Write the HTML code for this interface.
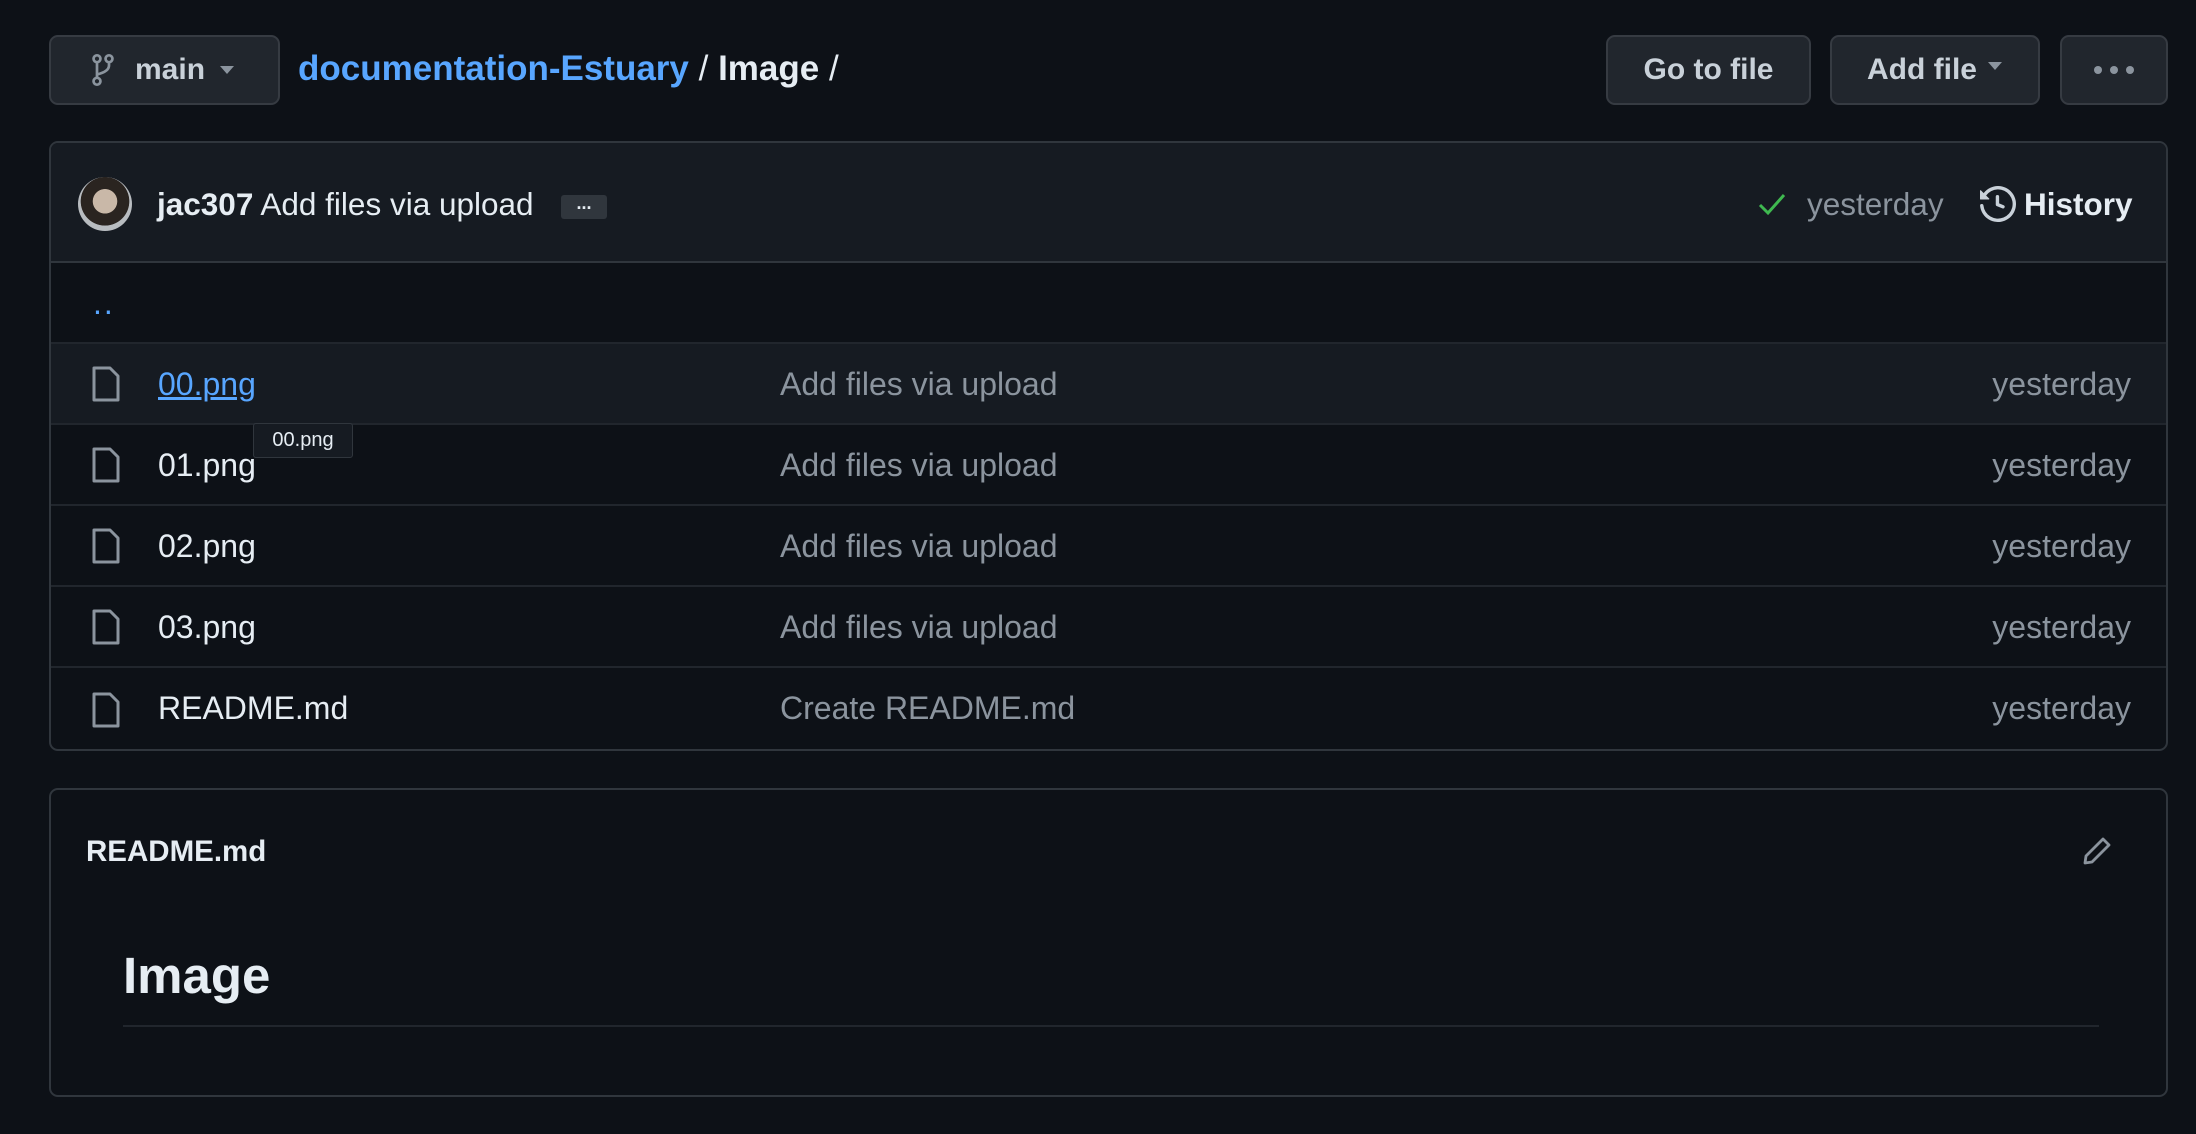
<!DOCTYPE html>
<html><head><style>
*{box-sizing:border-box;margin:0;padding:0}
body{width:2196px;height:1134px;background:#0d1117;font-family:"Liberation Sans",sans-serif;color:#e6edf3;position:relative;overflow:hidden}
.a{position:absolute}
.btn{position:absolute;top:35px;height:70px;background:#21262d;border:2px solid #363b42;border-radius:9px;font-size:30px;font-weight:bold;color:#c9d1d9;display:flex;align-items:center;justify-content:center}
.box{position:absolute;left:49px;width:2119px;border:2px solid #30363d;border-radius:9px;overflow:hidden}
.row{position:absolute;left:0;right:0;height:81px;border-top:2px solid #21262d;font-size:32px;display:flex;align-items:center}
.row .n{position:absolute;left:107px;color:#e6edf3;top:22px}
.row .m{position:absolute;left:729px;color:#8b949e;top:22px}
.row .d{position:absolute;right:35px;color:#8b949e;top:22px}
.row svg{position:absolute;left:39px}
</style></head><body>
<div class="btn" style="left:49px;width:231px;justify-content:flex-start;padding-left:40px">
<svg width="24" height="34" viewBox="0 0 16 22" style="margin-right:20px"><g fill="none" stroke="#8b949e" stroke-width="1.8"><circle cx="4" cy="3.5" r="2.3"/><circle cx="4" cy="18.5" r="2.3"/><circle cx="12" cy="3.5" r="2.3"/><path d="M4 6v10M12 6v2q0 4-8 6"/></g></svg>
<span style="color:#c9d1d9">main</span>
<svg width="16" height="10" viewBox="0 0 16 10" style="margin-left:14px"><path d="M1 1h14L8 9z" fill="#8b949e"/></svg>
</div>
<div class="a" style="left:298px;top:49px;font-size:35px;font-weight:bold"><span style="color:#58a6ff">documentation-Estuary</span><span style="font-weight:normal;color:#e6edf3"> / </span>Image<span style="font-weight:normal"> /</span></div>
<div class="btn" style="left:1606px;width:205px">Go to file</div>
<div class="btn" style="left:1830px;width:210px">Add file<svg width="16" height="10" viewBox="0 0 16 10" style="margin-left:10px;margin-top:-8px"><path d="M1 1h14L8 9z" fill="#8b949e"/></svg></div>
<div class="btn" style="left:2060px;width:108px;gap:8px"><i style="width:8px;height:8px;border-radius:4px;background:#8b949e"></i><i style="width:8px;height:8px;border-radius:4px;background:#8b949e"></i><i style="width:8px;height:8px;border-radius:4px;background:#8b949e"></i></div>

<div class="box" style="top:141px;height:610px">
<div class="a" style="left:0;top:0;right:0;height:120px;background:#161b22"></div>
<div class="a" style="left:27px;top:34px;width:54px;height:54px;border-radius:27px;background:radial-gradient(circle at 50% 45%,#c9b8a8 0 30%,#2a2420 31% 60%,#b8bcc0 61%)"></div>
<div class="a" style="left:106px;top:43px;font-size:31.5px"><b>jac307</b> Add files via upload</div>
<div class="a" style="left:510px;top:52px;width:46px;height:24px;background:#30363d;border-radius:3px;color:#e6edf3;font-size:18px;text-align:center;line-height:16px;font-weight:bold">...</div>
<svg class="a" style="left:1706px;top:48px" width="30" height="26" viewBox="0 0 30 26"><path d="M3 14l8 8L27 4" fill="none" stroke="#3fb950" stroke-width="3"/></svg>
<div class="a" style="left:1756px;top:43px;font-size:31.5px;color:#8b949e">yesterday</div>
<svg class="a" style="left:1929px;top:43px" width="36" height="36" viewBox="0 0 16 16"><path fill="#c9d1d9" d="M1.643 3.143.427 1.927A.25.25 0 0 0 0 2.104V5.750c0 .138.112.25.25.25h3.646a.25.25 0 0 0 .177-.427L2.715 4.215a6.5 6.5 0 1 1-1.18 4.458.75.75 0 1 0-1.493.154 8.001 8.001 0 1 0 1.6-5.684ZM7.75 4a.75.75 0 0 1 .75.75v2.992l2.028.812a.75.75 0 0 1-.557 1.392l-2.5-1A.751.751 0 0 1 7 8.25v-3.5A.75.75 0 0 1 7.75 4Z"/></svg>
<div class="a" style="left:1973px;top:43px;font-size:31.5px;font-weight:bold;color:#e6edf3">History</div>
<div class="row" style="top:118px;border-top-color:#30363d"><span class="n" style="color:#58a6ff;left:42px;top:22px;letter-spacing:2px">..</span></div>
<div class="row" style="top:199px;background:#161b22"><svg width="32" height="36" viewBox="0 0 16 18"><path d="M2 1h8l4 4v12H2z" fill="none" stroke="#8b949e" stroke-width="1.5" stroke-linejoin="round"/></svg><span class="n" style="color:#58a6ff;text-decoration:underline">00.png</span><span class="m">Add files via upload</span><span class="d">yesterday</span></div>
<div class="row" style="top:280px"><svg width="32" height="36" viewBox="0 0 16 18"><path d="M2 1h8l4 4v12H2z" fill="none" stroke="#8b949e" stroke-width="1.5" stroke-linejoin="round"/></svg><span class="n">01.png</span><span class="m">Add files via upload</span><span class="d">yesterday</span></div>
<div class="row" style="top:361px"><svg width="32" height="36" viewBox="0 0 16 18"><path d="M2 1h8l4 4v12H2z" fill="none" stroke="#8b949e" stroke-width="1.5" stroke-linejoin="round"/></svg><span class="n">02.png</span><span class="m">Add files via upload</span><span class="d">yesterday</span></div>
<div class="row" style="top:442px"><svg width="32" height="36" viewBox="0 0 16 18"><path d="M2 1h8l4 4v12H2z" fill="none" stroke="#8b949e" stroke-width="1.5" stroke-linejoin="round"/></svg><span class="n">03.png</span><span class="m">Add files via upload</span><span class="d">yesterday</span></div>
<div class="row" style="top:523px;height:85px"><svg width="32" height="36" viewBox="0 0 16 18"><path d="M2 1h8l4 4v12H2z" fill="none" stroke="#8b949e" stroke-width="1.5" stroke-linejoin="round"/></svg><span class="n">README.md</span><span class="m">Create README.md</span><span class="d">yesterday</span></div>
</div>
<div class="a" style="left:253px;top:423px;width:100px;height:35px;background:#161b22;border:1px solid #30363d;border-radius:3px;font-size:20px;color:#e6edf3;text-align:center;line-height:33px">00.png</div>

<div class="box" style="top:788px;height:309px">
<div class="a" style="left:35px;top:45px;font-size:29.5px;font-weight:bold">README.md</div>
<svg class="a" style="left:2030px;top:45px" width="32" height="32" viewBox="0 0 16 16"><path d="M11 2l3 3-8.5 8.5L2 14l.5-3.5z" fill="none" stroke="#8b949e" stroke-width="1.4" stroke-linejoin="round"/></svg>
<div class="a" style="left:72px;top:156px;font-size:51px;font-weight:bold">Image</div>
<div class="a" style="left:72px;top:235px;width:1976px;height:2px;background:#21262d"></div>
</div>
</body></html>
